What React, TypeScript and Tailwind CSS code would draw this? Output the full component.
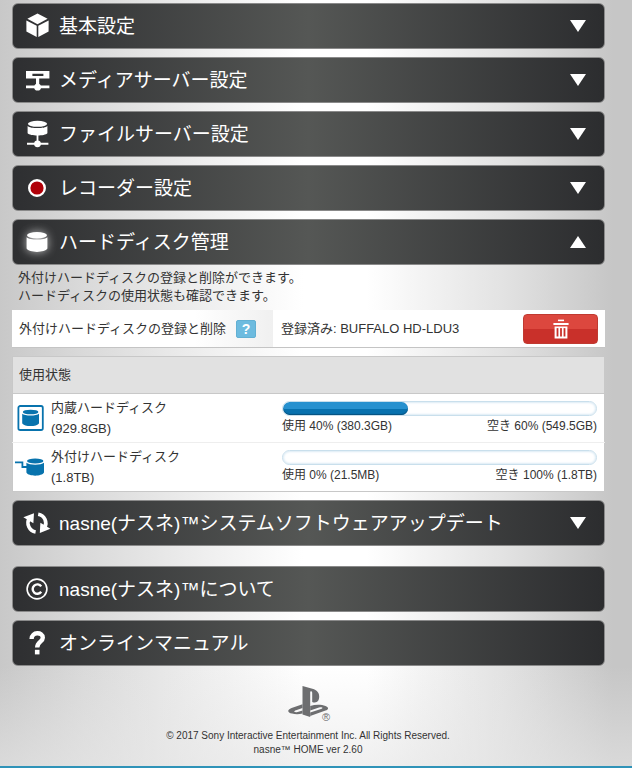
import { useState } from "react";
import type { ReactNode } from "react";

const FONT = "font-['Liberation_Sans','Noto_Sans_CJK_JP',sans-serif]";

const BAR =
  "flex h-[46px] w-full items-center gap-2 rounded-md border border-[#8a8a8a] bg-linear-to-r from-[#2e2f31] via-[#555755] to-[#2c2d2f] pl-2.5 pr-[18px] text-left text-[19px] leading-6 text-white";

const CubeIcon = () => (
  <svg width="28" height="28" viewBox="0 0 28 28" fill="#fff">
    <path d="M14.5 1.4 24.6 6.8 14.5 12.2 4.4 6.8Z" />
    <path d="M3.4 8.4 13.7 13.8V25L3.4 19.5Z" />
    <path d="M25.6 8.4 15.3 13.8V25L25.6 19.5Z" />
  </svg>
);

const MediaServerIcon = () => (
  <svg width="28" height="28" viewBox="0 0 28 28" fill="#fff">
    <path d="M3 5H26.4V12.6H16.2V19.6H26.4V22.2H3V19.6H13V12.6H3ZM9.4 7.8V10H20.4V7.8Z" fillRule="evenodd" />
    <circle cx="14.6" cy="21.2" r="3.4" />
  </svg>
);

const FileServerIcon = () => (
  <svg width="28" height="28" viewBox="0 0 28 28" fill="#fff">
    <ellipse cx="14.5" cy="3.8" rx="9.6" ry="3" />
    <path d="M4.6 5.9C7.5 8.8 21.5 8.8 24.4 5.9V13.2C22 16.2 7 16.2 4.6 13.2Z" />
    <path d="M13.6 14H15.4V22.8H25.4V24.8H4V22.8H13.6Z" />
    <circle cx="14.5" cy="23.8" r="3.4" />
  </svg>
);

const RecorderIcon = () => (
  <svg width="28" height="28" viewBox="0 0 28 28">
    <circle cx="14" cy="14" r="7.8" fill="#b00008" stroke="#fff" strokeWidth="2.4" />
  </svg>
);

const DiskIcon = () => (
  <svg
    width="28"
    height="28"
    viewBox="0 0 28 28"
    fill="#fff"
    className="drop-shadow-[0_0_5px_rgba(255,255,255,0.7)]"
  >
    <ellipse cx="14" cy="7.2" rx="10" ry="3.2" />
    <path d="M3.6 9.2C6.5 12.4 21.5 12.4 24.4 9.2V20.6C22 25 6 25 3.6 20.6Z" />
  </svg>
);

const UpdateIcon = () => (
  <svg width="28" height="28" viewBox="0 0 28 28">
    <g fill="none" stroke="#fff" strokeWidth="3.6">
      <path d="M12.6 23A9.2 9.2 0 0 1 6.3 9.2" />
      <path d="M15.2 5.2A9.2 9.2 0 0 1 21.6 18.8" />
    </g>
    <path d="M0.4 8.2 11 4.2 10.4 14.2Z" fill="#fff" />
    <path d="M27.4 19.8 16.8 24 17.4 13.8Z" fill="#fff" />
  </svg>
);

const CopyrightIcon = () => (
  <svg width="28" height="28" viewBox="0 0 28 28" fill="none" stroke="#fff">
    <circle cx="14" cy="14" r="9.9" strokeWidth="1.6" />
    <path d="M18.2 11.4A4.7 4.7 0 1 0 18.2 16.8" strokeWidth="2.4" />
  </svg>
);

const QuestionIcon = () => (
  <svg width="28" height="28" viewBox="0 0 28 28" fill="none">
    <path d="M8.6 10C8.6 2.6 19.8 2.6 19.8 8.8C19.8 12.8 14.2 12.6 14.2 18.4" stroke="#fff" strokeWidth="4.4" />
    <path d="M11.9 20.8H16.5V25.4H11.9Z" fill="#fff" />
  </svg>
);

const InternalDiskIcon = () => (
  <svg width="30" height="26" viewBox="0 0 30 26">
    <rect x="3.4" y="1" width="24.4" height="24" rx="1.8" fill="#fff" stroke="#0873ad" strokeWidth="1.8" />
    <ellipse cx="15.6" cy="7" rx="7.8" ry="2.3" fill="#0873ad" />
    <path d="M7.2 8.8C9.5 11.2 21.7 11.2 24 8.8V18.2C21.9 22 9.3 22 7.2 18.2Z" fill="#0873ad" />
  </svg>
);

const ExternalDiskIcon = () => (
  <svg width="30" height="26" viewBox="0 0 30 26" fill="#0873ad">
    <path d="M0 8.4H7.4V13H12.4" fill="none" stroke="#0873ad" strokeWidth="1.8" />
    <ellipse cx="20.2" cy="6.9" rx="8.2" ry="2.5" />
    <path d="M11.4 8.8C14.1 11.4 26.3 11.4 29 8.8V18.6C26.8 22.8 13.6 22.8 11.4 18.6Z" />
  </svg>
);

const TrashIcon = () => (
  <svg width="18" height="20" viewBox="0 0 18 20" fill="#fff">
    <path d="M6 0.6H12V2.2H6Z" />
    <path d="M1.4 4H16.6V6H1.4Z" />
    <path d="M2.6 7.4H15.4V19.4H2.6ZM4.6 9V17.4H6.4V9ZM8.1 9V17.4H9.9V9ZM11.6 9V17.4H13.4V9Z" fillRule="evenodd" />
  </svg>
);

const PlayStationLogo = () => (
  <svg width="40" height="31" viewBox="0 0 40 31" fill="#6d6e70" role="img" aria-label="PlayStation">
    <path d="M14.5 0 24.4 2.8C29 4.2 31.2 6.6 31.2 10.6C31.2 15.6 28.4 17.6 24.2 16V6.8C24.2 4.8 22.2 4.6 22.2 6.4V31L14.5 28.4Z" />
    <path d="M14.5 18.2 3.6 22C-1 23.7-.9 26.4 4 27.6C7.2 28.4 11 28.4 14.5 27.6V24.6L9.6 26C6.4 26.7 4.8 25.5 8 24.3L14.5 22Z" />
    <path d="M22.2 20C27.5 18.2 33.5 18.4 37.5 20C41 21.4 40.8 23.3 37.5 24.6L22.2 30V26.6L33 22.9C35.8 21.8 34 20.9 31 21.6L22.2 24.4Z" />
  </svg>
);

type SectionProps = {
  icon: ReactNode;
  title: string;
  open: boolean;
  onToggle: () => void;
  children?: ReactNode;
};

function Section({ icon, title, open, onToggle, children }: SectionProps) {
  return (
    <section>
      <h2>
        <button type="button" className={BAR} aria-expanded={open} onClick={onToggle}>
          <span className="shrink-0">{icon}</span>
          <span className="flex-1 pt-0.5">{title}</span>
          <svg width="16" height="12" viewBox="0 0 16 12" fill="#fff">
            {open ? <path d="M8 0 16 12H0Z" /> : <path d="M0 0H16L8 12Z" />}
          </svg>
        </button>
      </h2>
      {open && children}
    </section>
  );
}

type BarLinkProps = {
  icon: ReactNode;
  title: string;
};

function BarLink({ icon, title }: BarLinkProps) {
  return (
    <a href="#" className={BAR}>
      <span className="shrink-0">{icon}</span>
      <span className="pt-0.5">{title}</span>
    </a>
  );
}

type Disk = {
  name: string;
  size: string;
  percent: number;
  used: string;
  free: string;
  icon: ReactNode;
};

const disks: Disk[] = [
  {
    name: "内蔵ハードディスク",
    size: "929.8GB",
    percent: 40,
    used: "380.3GB",
    free: "549.5GB",
    icon: <InternalDiskIcon />,
  },
  {
    name: "外付けハードディスク",
    size: "1.8TB",
    percent: 0,
    used: "21.5MB",
    free: "1.8TB",
    icon: <ExternalDiskIcon />,
  },
];

function UsageBar({ label, percent }: { label: string; percent: number }) {
  return (
    <div
      role="progressbar"
      aria-label={label}
      aria-valuenow={percent}
      aria-valuemin={0}
      aria-valuemax={100}
      className="h-[15px] overflow-hidden rounded-full border border-[#c9dfec] bg-white shadow-[inset_0_0_2px_1px_#dcebf5]"
    >
      {percent > 0 && (
        <div
          className="h-full rounded-full bg-linear-to-b from-[#2791cf] from-50% to-[#0871ae] to-50% shadow-[inset_0_-1px_1px_#07527f]"
          style={{ width: `${percent}%` }}
        />
      )}
    </div>
  );
}

function DiskManagement() {
  return (
    <div className="text-[13px] leading-[18px] text-[#333]">
      <p className="px-1.5 pt-1 pb-[5px]">
        外付けハードディスクの登録と削除ができます。
        <br />
        ハードディスクの使用状態も確認できます。
      </p>

      <div className="flex h-[38px] items-stretch border-b border-[#c4c4c4] bg-white">
        <div className="flex w-[44%] items-center gap-2.5 bg-linear-to-r from-white from-70% to-[#f0f0f0] pl-[7px]">
          <span>外付けハードディスクの登録と削除</span>
          <button
            type="button"
            aria-label="ヘルプ"
            className="flex h-[18px] w-5 items-center justify-center rounded-xs border border-[#62b0d3] bg-[#6dbbdf] text-[14px] leading-4 font-bold text-white"
          >
            ?
          </button>
        </div>
        <div className="flex flex-1 items-center justify-between pr-[7px] pl-2">
          <span>登録済み: BUFFALO HD-LDU3</span>
          <button
            type="button"
            aria-label="削除"
            className="flex h-[30px] w-[75px] items-center justify-center rounded-[4px] border border-[#c03a31] bg-linear-to-b from-[#dc473e] from-50% to-[#c9302a] to-50%"
          >
            <TrashIcon />
          </button>
        </div>
      </div>

      <table className="mt-2 w-full table-fixed border border-[#c8c8c8] bg-white">
        <colgroup>
          <col className="w-[44%]" />
          <col />
        </colgroup>
        <thead>
          <tr className="h-[37px] border-b border-[#c8c8c8] bg-[#e1e1e1]">
            <th colSpan={2} className="pl-1.5 text-left font-normal">
              使用状態
            </th>
          </tr>
        </thead>
        <tbody>
          {disks.map((disk) => (
            <tr key={disk.name} className="h-[49px] border-t border-[#eee]">
              <th className="font-normal">
                <div className="flex items-center gap-1.5 pl-0.5 text-left leading-[21px]">
                  {disk.icon}
                  <div>
                    {disk.name}
                    <br />({disk.size})
                  </div>
                </div>
              </th>
              <td className="pr-[7px] pl-[9px] text-[12px]">
                <UsageBar label={disk.name} percent={disk.percent} />
                <div className="flex justify-between pt-px">
                  <span>
                    使用 {disk.percent}% ({disk.used})
                  </span>
                  <span>
                    空き {100 - disk.percent}% ({disk.free})
                  </span>
                </div>
              </td>
            </tr>
          ))}
        </tbody>
      </table>
    </div>
  );
}

export default function App() {
  const [openSection, setOpenSection] = useState<string | null>("disk");

  const toggle = (id: string) => {
    setOpenSection(openSection === id ? null : id);
  };

  return (
    <div
      className={`flex min-h-screen flex-col border-b-2 border-[#2f93b8] bg-[linear-gradient(to_right,#c8c8c8,#d8d8d8_12%,#ececec_30%,#fff_48%,#fff_58%,#e2e2e2_80%,#c6c6c6_97%)] ${FONT}`}
    >
      <main className="flex flex-col gap-2 pt-[3px] pr-[27px] pl-3">
        <Section
          icon={<CubeIcon />}
          title="基本設定"
          open={openSection === "basic"}
          onToggle={() => toggle("basic")}
        />
        <Section
          icon={<MediaServerIcon />}
          title="メディアサーバー設定"
          open={openSection === "media"}
          onToggle={() => toggle("media")}
        />
        <Section
          icon={<FileServerIcon />}
          title="ファイルサーバー設定"
          open={openSection === "file"}
          onToggle={() => toggle("file")}
        />
        <Section
          icon={<RecorderIcon />}
          title="レコーダー設定"
          open={openSection === "recorder"}
          onToggle={() => toggle("recorder")}
        />
        <Section
          icon={<DiskIcon />}
          title="ハードディスク管理"
          open={openSection === "disk"}
          onToggle={() => toggle("disk")}
        >
          <DiskManagement />
        </Section>
        <Section
          icon={<UpdateIcon />}
          title="nasne(ナスネ)™システムソフトウェアアップデート"
          open={openSection === "update"}
          onToggle={() => toggle("update")}
        />
        <nav className="flex flex-col gap-2 pt-3">
          <BarLink icon={<CopyrightIcon />} title="nasne(ナスネ)™について" />
          <BarLink icon={<QuestionIcon />} title="オンラインマニュアル" />
        </nav>
      </main>

      <footer className="flex flex-1 flex-col items-center bg-linear-to-b from-transparent to-[#e6e6e6]/60 pt-5 pr-4 text-center text-[10px] leading-[14px] text-[#333]">
        <div className="relative">
          <PlayStationLogo />
          <span className="absolute -right-0.5 -bottom-1.5 text-[11px] leading-3 text-[#6d6e70]">®</span>
        </div>
        <p className="pt-3">
          © 2017 Sony Interactive Entertainment Inc. All Rights Reserved.
          <br />
          nasne™ HOME ver 2.60
        </p>
      </footer>
    </div>
  );
}
